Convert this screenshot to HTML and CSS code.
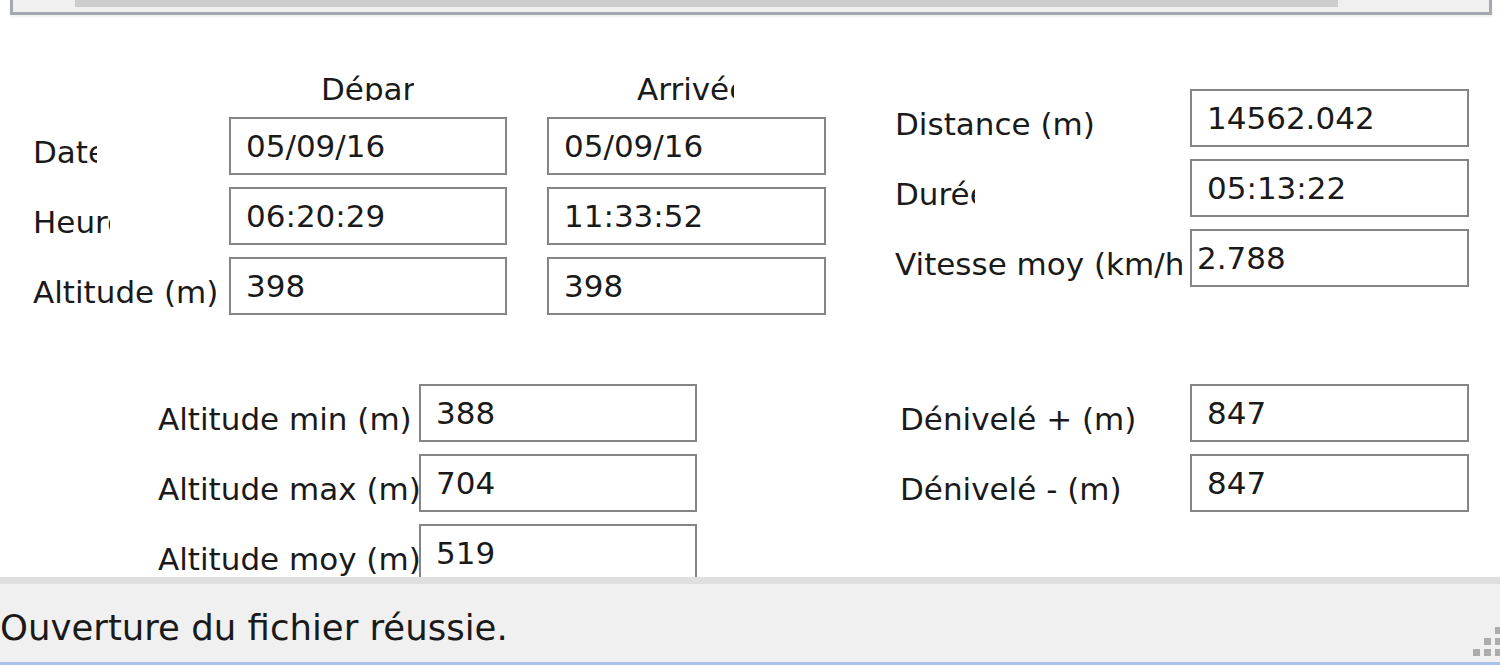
FILE: index.html
```html
<!DOCTYPE html>
<html lang="fr">
<head>
    <meta charset="UTF-8">
    <meta name="viewport" content="width=device-width, initial-scale=1.0">
    <title>Analyse de trace GPS</title>
    <link rel="stylesheet" href="styles.css">
</head>
<body>
    <div class="window">
        <!-- bas du panneau graphique, avec sa barre de défilement -->
        <div class="scroll-panel">
            <div class="thumb"></div>
        </div>

        <main class="form">
            <section class="band band-top">
                <div class="trip">
                    <span></span>
                    <span class="col-head head-depart">Départ</span>
                    <span class="col-head head-arrivee col-arr">Arrivée</span>

                    <label class="lbl lbl-date">Date</label>
                    <input class="field" type="text" value="05/09/16" readonly>
                    <input class="field col-arr" type="text" value="05/09/16" readonly>

                    <label class="lbl lbl-heure">Heure</label>
                    <input class="field" type="text" value="06:20:29" readonly>
                    <input class="field col-arr" type="text" value="11:33:52" readonly>

                    <label class="lbl">Altitude (m)</label>
                    <input class="field" type="text" value="398" readonly>
                    <input class="field col-arr" type="text" value="398" readonly>
                </div>

                <div class="summary">
                    <label class="lbl">Distance (m)</label>
                    <input class="field" type="text" value="14562.042" readonly>

                    <label class="lbl lbl-duree">Durée</label>
                    <input class="field" type="text" value="05:13:22" readonly>

                    <label class="lbl lbl-vitesse">Vitesse moy (km/h)</label>
                    <input class="field field-tight" type="text" value="2.788" readonly>
                </div>
            </section>

            <section class="band band-bottom">
                <div class="altitudes">
                    <label class="lbl">Altitude min (m)</label>
                    <input class="field" type="text" value="388" readonly>

                    <label class="lbl">Altitude max (m)</label>
                    <input class="field" type="text" value="704" readonly>

                    <label class="lbl">Altitude moy (m)</label>
                    <input class="field" type="text" value="519" readonly>
                </div>

                <div class="elevation">
                    <label class="lbl">Dénivelé + (m)</label>
                    <input class="field" type="text" value="847" readonly>

                    <label class="lbl">Dénivelé - (m)</label>
                    <input class="field" type="text" value="847" readonly>
                </div>
            </section>
        </main>

        <footer class="status">
            <span class="status-text">Ouverture du fichier réussie.</span>
            <svg class="grip" width="27" height="29" viewBox="0 0 27 29">
                <rect x="22" y="0" width="7" height="7"/>
                <rect x="11" y="11" width="7" height="7"/>
                <rect x="22" y="11" width="7" height="7"/>
                <rect x="0" y="22" width="7" height="7"/>
                <rect x="11" y="22" width="7" height="7"/>
                <rect x="22" y="22" width="7" height="7"/>
            </svg>
        </footer>
    </div>
</body>
</html>
```

FILE: styles.css
```css
body {
    margin: 0;
    background-color: #fff;
    font-family: "DejaVu Sans", Tahoma, sans-serif;
    font-size: 31px;
    color: #1a1a1a;
    overflow: hidden;
}

.window {
    width: 1500px;
    height: 665px;
    display: flex;
    flex-direction: column;
}

/* panneau du haut, coupé par la fenêtre */
.scroll-panel {
    height: 15px;
    margin: 0 8px 0 10px;
    box-sizing: border-box;
    background-color: #f0f0f0;
    border: 3px solid #a4a8b0;
    border-top: none;
    box-shadow: 0 2px 2px rgba(0, 0, 0, 0.06);
}

.thumb {
    width: 1263px;
    height: 7px;
    margin-left: 62px;
    background-color: #cdcdcd;
}

.form {
    flex: 1;
    overflow: hidden;
}

.band {
    display: flex;
    align-items: flex-start;
}

.band-bottom {
    margin-top: 69px;
}

/* grilles des champs */
.trip {
    display: grid;
    grid-template-columns: 196px 278px 40px 279px;
    grid-template-rows: 36px repeat(3, 58px);
    row-gap: 12px;
    margin: 54px 0 0 33px;
}

.col-arr {
    grid-column: 4;
}

.summary {
    display: grid;
    grid-template-columns: 295px 279px;
    grid-auto-rows: 58px;
    row-gap: 12px;
    margin: 74px 0 0 69px;
}

.altitudes {
    display: grid;
    grid-template-columns: 261px 278px;
    grid-auto-rows: 58px;
    row-gap: 12px;
    margin-left: 158px;
}

.elevation {
    display: grid;
    grid-template-columns: 290px 279px;
    grid-auto-rows: 58px;
    row-gap: 12px;
    margin-left: 203px;
}

.col-head {
    height: 32px;
    line-height: 40px;
    white-space: nowrap;
    overflow: hidden;
    justify-self: start;
}

.head-depart {
    width: 93px;
    margin-left: 92px;
}

.head-arrivee {
    width: 97px;
    margin-left: 90px;
}

.lbl {
    padding-top: 12px;
    line-height: 46px;
    white-space: nowrap;
    overflow: hidden;
}

/* libellés trop courts pour leur texte */
.lbl-date {
    width: 64px;
}

.lbl-heure {
    width: 77px;
}

.lbl-duree {
    width: 80px;
}

.lbl-vitesse {
    width: 290px;
}

.field {
    width: 100%;
    height: 58px;
    box-sizing: border-box;
    margin: 0;
    padding: 0 0 0 15px;
    border: 2px solid #858585;
    background-color: #fff;
    font: inherit;
    color: inherit;
    outline: none;
}

.field-tight {
    padding-left: 5px;
}

/* barre d'état */
.status {
    height: 88px;
    box-sizing: border-box;
    display: flex;
    align-items: center;
    background-color: #f0f0f0;
    border-top: 7px solid #dfdfdf;
    border-bottom: 3px solid #a9c1e8;
}

.status-text {
    font-size: 35.5px;
    padding-top: 8px;
}

.grip {
    margin-left: auto;
    align-self: flex-end;
    margin-bottom: 6px;
    fill: #acacac;
}
```
